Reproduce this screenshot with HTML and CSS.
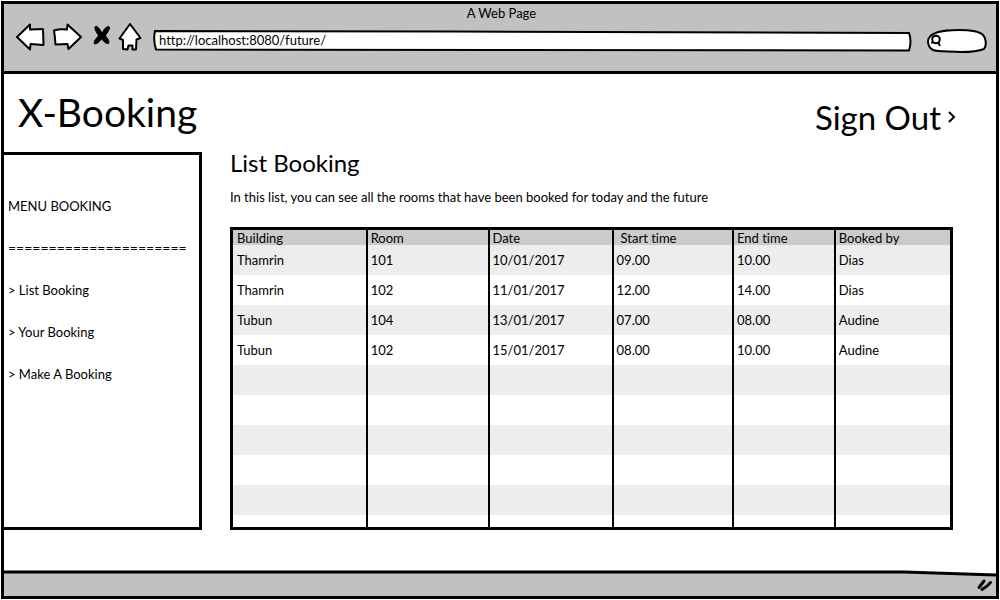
FILE: index.html
```html
<!DOCTYPE html>
<html lang="en">
<head>
<meta charset="utf-8">
<title>A Web Page</title>
<link rel="stylesheet" href="styles.css">
</head>
<body>
<div class="window">
  <header class="chrome">
    <div class="chrome-title">A Web Page</div>
    <div class="toolbar">
      <button class="tool" type="button" aria-label="Back">
        <svg width="29" height="28" viewBox="0 0 29 28"><path d="M1 14 14 1.500v5L27 6l.5 16-13-1-.5 5.500Z"/></svg>
      </button>
      <button class="tool tool-forward" type="button" aria-label="Forward">
        <svg width="30" height="28" viewBox="0 0 30 28"><path d="M1 7.500Q7 5.500 14 6.500L14.500 1.500 28 14 15.500 26 14.500 21 2.500 21.500Q2 14 1 7.500Z"/></svg>
      </button>
      <button class="tool tool-stop" type="button" aria-label="Stop">
        <svg width="18" height="28" viewBox="0 0 18 28"><path class="solid" d="M3 3C7 5 8 9 9.500 10 10.500 7 12 4 16 3.500 18 5 14 10 12.500 12.500 14 15 17 18 15.500 20.500 12 21 10 17 8.500 16 6 19 4 21 1.500 21 0 18 4 15 5.500 12.500 4 10 0 5 3 3Z"/></svg>
      </button>
      <button class="tool" type="button" aria-label="Home">
        <svg width="24" height="28" viewBox="0 0 24 28"><path d="M12 1 22.500 15 18.500 16.500 18 26.500H14.500V22.500H10.500L9.500 26.500 5 26V17L1.500 15.500Z"/></svg>
      </button>
      <label class="field address">
        <svg class="outline" viewBox="0 0 758 22" preserveAspectRatio="none" aria-hidden="true"><path d="M2 1 300 1.500 755 3Q758 11 755 20.500L350 20 3 19.500Q0 10 2 1Z"/></svg>
        <input type="text" aria-label="Address" value="http://localhost:8080/future/">
      </label>
      <label class="field search">
        <svg class="outline" viewBox="0 0 60 24" preserveAspectRatio="none" aria-hidden="true"><path d="M1 12C2 3 15 1 32 1 47 1 53 3 56 6 59 9 60 16 57 20 52 22 43 23 34 23 22 22 11 23 6 21 2 19 1 16 1 12Z"/></svg>
        <svg class="lens" width="12" height="13" viewBox="0 0 12 13" aria-hidden="true"><circle cx="6" cy="5.500" r="3.800"/><path d="M8 8 10 12M2 8V9.500"/></svg>
        <input type="search" aria-label="Search">
      </label>
    </div>
  </header>

  <div class="page">
    <div class="masthead">
      <h1>X-Booking</h1>
      <a class="sign-out" href="#">Sign Out
        <svg width="9" height="14" viewBox="0 0 9 14" aria-hidden="true"><path d="M2 2 7 7 2 12"/></svg>
      </a>
    </div>
    <div class="columns">
      <nav class="menu">
        <div>MENU BOOKING</div>
        <div class="rule" aria-hidden="true">======================</div>
        <a href="#">&gt; List Booking</a>
        <a href="#">&gt; Your Booking</a>
        <a href="#">&gt; Make A Booking</a>
      </nav>
      <main>
        <h2>List Booking</h2>
        <p>In this list, you can see all the rooms that have been booked for today and the future</p>
        <table>
          <colgroup><col class="c-building"><col class="c-room"><col class="c-date"><col class="c-start"><col class="c-end"><col class="c-by"></colgroup>
          <thead>
            <tr><th>Building</th><th>Room</th><th>Date</th><th class="inset">Start time</th><th>End time</th><th>Booked by</th></tr>
          </thead>
          <tbody>
            <tr><td>Thamrin</td><td>101</td><td>10/01/2017</td><td>09.00</td><td>10.00</td><td>Dias</td></tr>
            <tr><td>Thamrin</td><td>102</td><td>11/01/2017</td><td>12.00</td><td>14.00</td><td>Dias</td></tr>
            <tr><td>Tubun</td><td>104</td><td>13/01/2017</td><td>07.00</td><td>08.00</td><td>Audine</td></tr>
            <tr><td>Tubun</td><td>102</td><td>15/01/2017</td><td>08.00</td><td>10.00</td><td>Audine</td></tr>
            <tr><td></td><td></td><td></td><td></td><td></td><td></td></tr>
            <tr><td></td><td></td><td></td><td></td><td></td><td></td></tr>
            <tr><td></td><td></td><td></td><td></td><td></td><td></td></tr>
            <tr><td></td><td></td><td></td><td></td><td></td><td></td></tr>
            <tr><td></td><td></td><td></td><td></td><td></td><td></td></tr>
            <tr class="partial"><td></td><td></td><td></td><td></td><td></td><td></td></tr>
          </tbody>
        </table>
      </main>
    </div>
  </div>

  <footer class="status">
    <svg class="edge" viewBox="0 0 992 26" preserveAspectRatio="none" aria-hidden="true"><path d="M0 2 900 2 992 5V26H0Z" fill="#c1c1c1"/><path d="M0 2 900 2 992 5" fill="none" stroke="#000" stroke-width="3"/></svg>
    <svg class="grip" width="18" height="14" viewBox="0 0 18 14" aria-hidden="true"><path d="M3 9.500 8 3M6 11.500Q12 8 14.500 4.500"/></svg>
  </footer>
</div>
</body>
</html>
```

FILE: styles.css
```css
* {
  box-sizing: border-box;
}

body {
  margin: 0;
  padding: 1px;
  background: #fff;
  color: #000;
  font: 13px/18px Lato, "Open Sans", sans-serif;
  font-variant-ligatures: none;
}

a {
  color: inherit;
  text-decoration: none;
}

h1,
h2,
p {
  margin: 0;
  font-weight: 400;
}

.window {
  display: flex;
  flex-direction: column;
  min-height: calc(100vh - 2px);
  border: 3px solid #000;
}

.chrome {
  padding: 0 9px 12px 12px;
  background: #c1c1c1;
  border-bottom: 3px solid #000;
}

.chrome-title {
  text-align: center;
}

.toolbar {
  display: flex;
  align-items: center;
  height: 37px;
}

.tool {
  display: flex;
  margin: 0 8px 8px 0;
  padding: 0;
  border: 0;
  background: none;
}

.tool-forward {
  margin-right: 10px;
}

.tool-stop {
  margin-right: 7px;
}

.tool path {
  fill: #fff;
  stroke: #000;
  stroke-width: 2;
  stroke-linejoin: round;
}

.tool .solid {
  fill: #000;
  stroke-width: 1;
}

.field {
  position: relative;
  display: flex;
  align-items: center;
}

.outline {
  position: absolute;
  inset: 0;
  width: 100%;
  height: 100%;
}

.outline path {
  fill: #fff;
  stroke: #000;
  stroke-width: 2;
  vector-effect: non-scaling-stroke;
}

.field input {
  position: relative;
  flex: 1;
  min-width: 0;
  padding: 0;
  border: 0;
  outline: 0;
  background: none;
  color: inherit;
  font: inherit;
}

.address {
  flex: 1;
  height: 22px;
  margin-left: 3px;
  padding: 0 8px 2px 6px;
}

.search {
  width: 60px;
  height: 24px;
  margin-left: 15px;
  padding: 0 8px 0 3px;
}

.lens {
  position: relative;
  fill: none;
  stroke: #000;
  stroke-width: 2;
}

.page {
  flex: 1;
  padding-bottom: 40px;
}

.masthead {
  display: flex;
  justify-content: space-between;
  align-items: center;
  height: 78px;
  padding: 0 40px 2px 14px;
}

h1 {
  font-size: 39px;
  line-height: 48px;
}

.sign-out {
  display: flex;
  align-items: center;
  gap: 6px;
  padding-top: 10px;
  font-size: 33px;
  line-height: 40px;
}

.sign-out path {
  fill: none;
  stroke: #000;
  stroke-width: 2;
}

.columns {
  display: flex;
}

.menu {
  display: flex;
  flex-direction: column;
  gap: 24px;
  width: 198px;
  padding: 42px 4px;
  border: solid #000;
  border-width: 3px 3px 3px 0;
}

.rule {
  font-size: 14px;
}

main {
  flex: 1;
  margin-left: 28px;
  padding-right: 43px;
}

h2 {
  margin-bottom: 14px;
  font-size: 24px;
  line-height: 22px;
}

p {
  margin-bottom: 21px;
}

table {
  width: 100%;
  table-layout: fixed;
  border: 3px solid #000;
  border-spacing: 0;
}

.c-building {
  width: 18.5%;
}

.c-room {
  width: 17%;
}

.c-date {
  width: 17.3%;
}

.c-start {
  width: 16.8%;
}

.c-end {
  width: 14.2%;
}

.c-by {
  width: 16.2%;
}

th,
td {
  padding: 0 3px;
  border-left: 2px solid #000;
  font-weight: 400;
  text-align: left;
}

th:first-child,
td:first-child {
  padding-left: 4px;
  border-left: 0;
}

th {
  height: 15px;
  background: #cbcbcb;
  line-height: 14px;
}

th.inset {
  padding-left: 7px;
}

td {
  height: 30px;
}

tbody tr:nth-child(odd) {
  background: #ededed;
}

.partial td {
  height: 12px;
}

.status {
  position: relative;
  display: flex;
  justify-content: flex-end;
  align-items: center;
  height: 26px;
  padding-right: 2px;
}

.edge {
  position: absolute;
  inset: 0;
  width: 100%;
  height: 100%;
}

.grip {
  position: relative;
  margin-top: 4px;
  fill: none;
  stroke: #000;
  stroke-width: 3;
  stroke-linecap: round;
}
```
